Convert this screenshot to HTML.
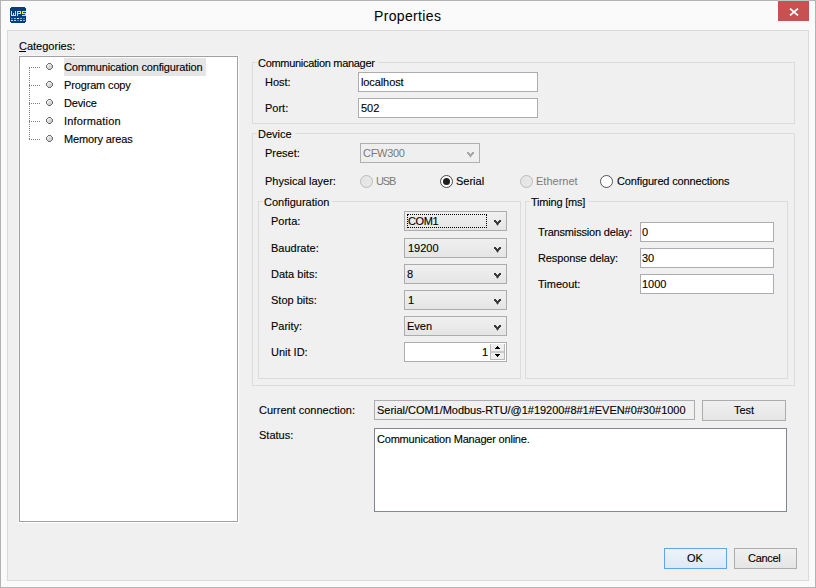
<!DOCTYPE html>
<html><head><meta charset="utf-8">
<style>
*{box-sizing:border-box;margin:0;padding:0}
html,body{width:816px;height:588px;overflow:hidden;background:#fafafa}
body{position:relative;font-family:"Liberation Sans",sans-serif;font-size:11px;color:#000}
.a{position:absolute}
.t{position:absolute;white-space:pre;line-height:13px;height:13px;-webkit-text-stroke:0.12px #000}
.g{color:#7a7a7a;-webkit-text-stroke:0}
.n{letter-spacing:-0.15px}
.grp{position:absolute;border:1px solid #dcdcdc}
.leg{position:absolute;background:#f0f0f0;padding:0 3px 0 1px;white-space:pre;line-height:13px;height:13px;-webkit-text-stroke:0.12px #000}
.tb{position:absolute;background:#fff;border:1px solid #abadb3}
.combo{position:absolute;border:1px solid #acacac;background:linear-gradient(#f0f0f0,#e5e5e5);height:20px;width:103px;left:404px}
.btn{position:absolute;border:1px solid #acacac;background:linear-gradient(#f0f0f0,#e5e5e5)}
.chev{position:absolute}
.rad{position:absolute;width:13px;height:13px;border-radius:50%}
</style></head><body>
<!-- window frame -->
<div class="a" style="left:0;top:0;width:816px;height:588px;border:1px solid #b3b3b3"></div>
<div class="a" style="left:778px;top:0;width:31px;height:1px;background:#b9c8c8"></div>
<!-- icon -->
<svg class="a" style="left:10px;top:7px" width="16" height="16" viewBox="0 0 16 16" shape-rendering="crispEdges">
<path d="M1 0H15V1H16V15H15V16H1V15H0V1H1Z" fill="#0a3c82"/>
<g fill="#f5f500">
<rect x="1" y="4" width="1" height="5"/><rect x="2" y="8" width="1" height="1"/><rect x="3" y="6" width="1" height="3"/><rect x="4" y="8" width="1" height="1"/><rect x="5" y="4" width="1" height="5"/>
<rect x="7" y="4" width="1" height="5"/><rect x="8" y="4" width="2" height="1"/><rect x="10" y="4" width="1" height="3"/><rect x="8" y="6" width="2" height="1"/>
<rect x="12" y="4" width="4" height="1"/><rect x="12" y="4" width="1" height="3"/><rect x="12" y="6" width="4" height="1"/><rect x="15" y="6" width="1" height="3"/><rect x="12" y="8" width="4" height="1"/>
</g><rect x="1" y="11" width="2" height="1" fill="#1e9ad6"/><rect x="4" y="11" width="2" height="1" fill="#5ec8e8"/><rect x="7" y="11" width="2" height="1" fill="#ffffff"/><rect x="10" y="11" width="2" height="1" fill="#5ec8e8"/><rect x="13" y="11" width="2" height="1" fill="#4a88b0"/><rect x="1" y="13" width="2" height="1" fill="#c8e6f0"/><rect x="4" y="13" width="2" height="1" fill="#b0dcf0"/><rect x="7" y="13" width="2" height="1" fill="#2a8ad0"/><rect x="10" y="13" width="2" height="1" fill="#c8e8f0"/><rect x="13" y="13" width="2" height="1" fill="#80b8e0"/></svg>
<div class="t" style="left:374px;top:7px;font-size:14px;line-height:18px;height:18px;letter-spacing:0.35px;color:#000;-webkit-text-stroke:0">Properties</div>
<div class="a" style="left:778px;top:1px;width:31px;height:20px;background:#c75050"></div>
<svg class="a" style="left:789px;top:8px" width="10" height="8" viewBox="0 0 10 8"><path d="M1 0.6L9 7.4M9 0.6L1 7.4" stroke="#fff" stroke-width="1.8"/></svg>

<!-- client -->
<div class="a" style="left:7px;top:30px;width:802px;height:551px;border:1px solid #dadada;background:#f0f0f0"></div>

<div class="t" style="left:19px;top:40px">Categories:</div>
<div class="a" style="left:19px;top:51px;width:7px;height:1px;background:#000"></div>

<!-- tree -->
<div class="a" style="left:18px;top:55px;width:221px;height:468px;border:1px solid #f6f6f6;border-right-color:#fff;border-bottom-color:#fff"></div>
<div class="a" style="left:19px;top:56px;width:219px;height:466px;background:#fff;border:1px solid #a0a0a0"></div>
<svg class="a" style="left:0;top:0" width="60" height="150" shape-rendering="crispEdges"><g fill="#7f7f7f"><rect x="29" y="67" width="1" height="1"/><rect x="29" y="68" width="1" height="1"/><rect x="29" y="70" width="1" height="1"/><rect x="29" y="72" width="1" height="1"/><rect x="29" y="74" width="1" height="1"/><rect x="29" y="76" width="1" height="1"/><rect x="29" y="78" width="1" height="1"/><rect x="29" y="80" width="1" height="1"/><rect x="29" y="82" width="1" height="1"/><rect x="29" y="84" width="1" height="1"/><rect x="29" y="85" width="1" height="1"/><rect x="29" y="86" width="1" height="1"/><rect x="29" y="88" width="1" height="1"/><rect x="29" y="90" width="1" height="1"/><rect x="29" y="92" width="1" height="1"/><rect x="29" y="94" width="1" height="1"/><rect x="29" y="96" width="1" height="1"/><rect x="29" y="98" width="1" height="1"/><rect x="29" y="100" width="1" height="1"/><rect x="29" y="102" width="1" height="1"/><rect x="29" y="103" width="1" height="1"/><rect x="29" y="104" width="1" height="1"/><rect x="29" y="106" width="1" height="1"/><rect x="29" y="108" width="1" height="1"/><rect x="29" y="110" width="1" height="1"/><rect x="29" y="112" width="1" height="1"/><rect x="29" y="114" width="1" height="1"/><rect x="29" y="116" width="1" height="1"/><rect x="29" y="118" width="1" height="1"/><rect x="29" y="120" width="1" height="1"/><rect x="29" y="121" width="1" height="1"/><rect x="29" y="122" width="1" height="1"/><rect x="29" y="124" width="1" height="1"/><rect x="29" y="126" width="1" height="1"/><rect x="29" y="128" width="1" height="1"/><rect x="29" y="130" width="1" height="1"/><rect x="29" y="132" width="1" height="1"/><rect x="29" y="134" width="1" height="1"/><rect x="29" y="136" width="1" height="1"/><rect x="29" y="138" width="1" height="1"/><rect x="29" y="139" width="1" height="1"/><rect x="31" y="67" width="1" height="1"/><rect x="31" y="85" width="1" height="1"/><rect x="31" y="103" width="1" height="1"/><rect x="31" y="121" width="1" height="1"/><rect x="31" y="139" width="1" height="1"/><rect x="33" y="67" width="1" height="1"/><rect x="33" y="85" width="1" height="1"/><rect x="33" y="103" width="1" height="1"/><rect x="33" y="121" width="1" height="1"/><rect x="33" y="139" width="1" height="1"/><rect x="35" y="67" width="1" height="1"/><rect x="35" y="85" width="1" height="1"/><rect x="35" y="103" width="1" height="1"/><rect x="35" y="121" width="1" height="1"/><rect x="35" y="139" width="1" height="1"/><rect x="37" y="67" width="1" height="1"/><rect x="37" y="85" width="1" height="1"/><rect x="37" y="103" width="1" height="1"/><rect x="37" y="121" width="1" height="1"/><rect x="37" y="139" width="1" height="1"/><rect x="39" y="67" width="1" height="1"/><rect x="39" y="85" width="1" height="1"/><rect x="39" y="103" width="1" height="1"/><rect x="39" y="121" width="1" height="1"/><rect x="39" y="139" width="1" height="1"/></g><defs><linearGradient id="bg" x1="0" y1="0" x2="1" y2="1"><stop offset="0" stop-color="#fafafa"/><stop offset="1" stop-color="#b9bcc0"/></linearGradient></defs><g transform="translate(0,63)"><g fill="url(#bg)"><rect x="47" y="1" width="5" height="5"/></g><g fill="#707070"><rect x="48" y="0" width="3" height="1"/><rect x="47" y="1" width="1" height="1"/><rect x="51" y="1" width="1" height="1"/><rect x="46" y="2" width="1" height="3"/><rect x="52" y="2" width="1" height="3"/><rect x="47" y="5" width="1" height="1"/><rect x="51" y="5" width="1" height="1"/><rect x="48" y="6" width="3" height="1"/></g></g><g transform="translate(0,81)"><g fill="url(#bg)"><rect x="47" y="1" width="5" height="5"/></g><g fill="#707070"><rect x="48" y="0" width="3" height="1"/><rect x="47" y="1" width="1" height="1"/><rect x="51" y="1" width="1" height="1"/><rect x="46" y="2" width="1" height="3"/><rect x="52" y="2" width="1" height="3"/><rect x="47" y="5" width="1" height="1"/><rect x="51" y="5" width="1" height="1"/><rect x="48" y="6" width="3" height="1"/></g></g><g transform="translate(0,99)"><g fill="url(#bg)"><rect x="47" y="1" width="5" height="5"/></g><g fill="#707070"><rect x="48" y="0" width="3" height="1"/><rect x="47" y="1" width="1" height="1"/><rect x="51" y="1" width="1" height="1"/><rect x="46" y="2" width="1" height="3"/><rect x="52" y="2" width="1" height="3"/><rect x="47" y="5" width="1" height="1"/><rect x="51" y="5" width="1" height="1"/><rect x="48" y="6" width="3" height="1"/></g></g><g transform="translate(0,117)"><g fill="url(#bg)"><rect x="47" y="1" width="5" height="5"/></g><g fill="#707070"><rect x="48" y="0" width="3" height="1"/><rect x="47" y="1" width="1" height="1"/><rect x="51" y="1" width="1" height="1"/><rect x="46" y="2" width="1" height="3"/><rect x="52" y="2" width="1" height="3"/><rect x="47" y="5" width="1" height="1"/><rect x="51" y="5" width="1" height="1"/><rect x="48" y="6" width="3" height="1"/></g></g><g transform="translate(0,135)"><g fill="url(#bg)"><rect x="47" y="1" width="5" height="5"/></g><g fill="#707070"><rect x="48" y="0" width="3" height="1"/><rect x="47" y="1" width="1" height="1"/><rect x="51" y="1" width="1" height="1"/><rect x="46" y="2" width="1" height="3"/><rect x="52" y="2" width="1" height="3"/><rect x="47" y="5" width="1" height="1"/><rect x="51" y="5" width="1" height="1"/><rect x="48" y="6" width="3" height="1"/></g></g></svg>
<div class="a" style="left:64px;top:58px;width:142px;height:18px;background:#e5e5e5"></div>
<div class="t n" style="left:64px;top:61px">Communication configuration</div>
<div class="t n" style="left:64px;top:79px">Program copy</div>
<div class="t n" style="left:64px;top:97px">Device</div>
<div class="t" style="left:64px;top:115px;letter-spacing:0.15px">Information</div>
<div class="t n" style="left:64px;top:133px">Memory areas</div>

<!-- comm manager -->
<div class="grp" style="left:252px;top:62px;width:543px;height:62px"></div>
<div class="leg" style="left:257px;top:57px;letter-spacing:-0.3px">Communication manager</div>
<div class="t" style="left:265px;top:76px">Host:</div>
<div class="tb" style="left:358px;top:72px;width:180px;height:20px"></div>
<div class="t" style="left:361px;top:76px;letter-spacing:-0.1px">localhost</div>
<div class="t" style="left:265px;top:102px">Port:</div>
<div class="tb" style="left:358px;top:98px;width:180px;height:20px"></div>
<div class="t" style="left:361px;top:102px">502</div>

<!-- device -->
<div class="grp" style="left:252px;top:133px;width:543px;height:253px"></div>
<div class="leg" style="left:257px;top:128px">Device</div>
<div class="t" style="left:265px;top:147px">Preset:</div>
<div class="a" style="left:360px;top:143px;width:120px;height:20px;background:#efefef;border:1px solid #b0b0b0"></div>
<div class="t g" style="left:363px;top:147px;letter-spacing:-0.3px">CFW300</div>
<svg class="chev" style="left:467px;top:152px" width="7" height="6" shape-rendering="crispEdges"><g fill="#a8a8a8"><rect x="0" y="0" width="1" height="1"/><rect x="1" y="0" width="1" height="1"/><rect x="5" y="0" width="1" height="1"/><rect x="6" y="0" width="1" height="1"/><rect x="0" y="1" width="1" height="1"/><rect x="1" y="1" width="1" height="1"/><rect x="2" y="1" width="1" height="1"/><rect x="4" y="1" width="1" height="1"/><rect x="5" y="1" width="1" height="1"/><rect x="6" y="1" width="1" height="1"/><rect x="1" y="2" width="1" height="1"/><rect x="2" y="2" width="1" height="1"/><rect x="3" y="2" width="1" height="1"/><rect x="4" y="2" width="1" height="1"/><rect x="5" y="2" width="1" height="1"/><rect x="2" y="3" width="1" height="1"/><rect x="3" y="3" width="1" height="1"/><rect x="4" y="3" width="1" height="1"/><rect x="3" y="4" width="1" height="1"/></g><g fill="#d4d4d4"><rect x="2" y="4" width="1" height="1"/><rect x="4" y="4" width="1" height="1"/><rect x="3" y="5" width="1" height="1"/></g></svg>
<div class="t" style="left:265px;top:175px">Physical layer:</div>

<div class="rad" style="left:360px;top:175px;border:1px solid #bcbcbc;background:#e6e6e6"></div>
<div class="t g" style="left:376px;top:175px;letter-spacing:-1.2px">USB</div>
<div class="rad" style="left:440px;top:175px;border:1px solid #444;background:#fff"></div>
<div class="a" style="left:443px;top:178px;width:7px;height:7px;border-radius:50%;background:#1e1e1e"></div>
<div class="t" style="left:456px;top:175px">Serial</div>
<div class="rad" style="left:520px;top:175px;border:1px solid #bcbcbc;background:#e6e6e6"></div>
<div class="t g" style="left:536px;top:175px">Ethernet</div>
<div class="rad" style="left:600px;top:175px;border:1px solid #555;background:#fff"></div>
<div class="t n" style="left:617px;top:175px">Configured connections</div>

<!-- configuration -->
<div class="grp" style="left:258px;top:201px;width:263px;height:178px"></div>
<div class="leg" style="left:263px;top:196px">Configuration</div>
<div class="t" style="left:271px;top:215px">Porta:</div>
<div class="t" style="left:271px;top:242px">Baudrate:</div>
<div class="t" style="left:271px;top:268px">Data bits:</div>
<div class="t" style="left:271px;top:294px">Stop bits:</div>
<div class="t" style="left:271px;top:320px">Parity:</div>
<div class="t" style="left:271px;top:346px">Unit ID:</div>
<div class="combo" style="top:211px"></div>
<div class="a" style="left:407px;top:214px;width:80px;height:14px;border:1px dotted #000"></div>
<div class="t" style="left:408px;top:215px;letter-spacing:-0.4px">COM1</div>
<div class="combo" style="top:238px"></div>
<div class="t" style="left:408px;top:242px">19200</div>
<div class="combo" style="top:264px"></div>
<div class="t" style="left:407px;top:268px">8</div>
<div class="combo" style="top:290px"></div>
<div class="t" style="left:408px;top:294px">1</div>
<div class="combo" style="top:316px"></div>
<div class="t" style="left:407px;top:320px">Even</div>
<svg class="chev" style="left:494px;top:220px" width="7" height="6" shape-rendering="crispEdges"><g fill="#3a3a3a"><rect x="0" y="0" width="1" height="1"/><rect x="1" y="0" width="1" height="1"/><rect x="5" y="0" width="1" height="1"/><rect x="6" y="0" width="1" height="1"/><rect x="0" y="1" width="1" height="1"/><rect x="1" y="1" width="1" height="1"/><rect x="2" y="1" width="1" height="1"/><rect x="4" y="1" width="1" height="1"/><rect x="5" y="1" width="1" height="1"/><rect x="6" y="1" width="1" height="1"/><rect x="1" y="2" width="1" height="1"/><rect x="2" y="2" width="1" height="1"/><rect x="3" y="2" width="1" height="1"/><rect x="4" y="2" width="1" height="1"/><rect x="5" y="2" width="1" height="1"/><rect x="2" y="3" width="1" height="1"/><rect x="3" y="3" width="1" height="1"/><rect x="4" y="3" width="1" height="1"/><rect x="3" y="4" width="1" height="1"/></g><g fill="#9a9a9a"><rect x="2" y="4" width="1" height="1"/><rect x="4" y="4" width="1" height="1"/><rect x="3" y="5" width="1" height="1"/></g></svg>
<svg class="chev" style="left:494px;top:247px" width="7" height="6" shape-rendering="crispEdges"><g fill="#3a3a3a"><rect x="0" y="0" width="1" height="1"/><rect x="1" y="0" width="1" height="1"/><rect x="5" y="0" width="1" height="1"/><rect x="6" y="0" width="1" height="1"/><rect x="0" y="1" width="1" height="1"/><rect x="1" y="1" width="1" height="1"/><rect x="2" y="1" width="1" height="1"/><rect x="4" y="1" width="1" height="1"/><rect x="5" y="1" width="1" height="1"/><rect x="6" y="1" width="1" height="1"/><rect x="1" y="2" width="1" height="1"/><rect x="2" y="2" width="1" height="1"/><rect x="3" y="2" width="1" height="1"/><rect x="4" y="2" width="1" height="1"/><rect x="5" y="2" width="1" height="1"/><rect x="2" y="3" width="1" height="1"/><rect x="3" y="3" width="1" height="1"/><rect x="4" y="3" width="1" height="1"/><rect x="3" y="4" width="1" height="1"/></g><g fill="#9a9a9a"><rect x="2" y="4" width="1" height="1"/><rect x="4" y="4" width="1" height="1"/><rect x="3" y="5" width="1" height="1"/></g></svg>
<svg class="chev" style="left:494px;top:273px" width="7" height="6" shape-rendering="crispEdges"><g fill="#3a3a3a"><rect x="0" y="0" width="1" height="1"/><rect x="1" y="0" width="1" height="1"/><rect x="5" y="0" width="1" height="1"/><rect x="6" y="0" width="1" height="1"/><rect x="0" y="1" width="1" height="1"/><rect x="1" y="1" width="1" height="1"/><rect x="2" y="1" width="1" height="1"/><rect x="4" y="1" width="1" height="1"/><rect x="5" y="1" width="1" height="1"/><rect x="6" y="1" width="1" height="1"/><rect x="1" y="2" width="1" height="1"/><rect x="2" y="2" width="1" height="1"/><rect x="3" y="2" width="1" height="1"/><rect x="4" y="2" width="1" height="1"/><rect x="5" y="2" width="1" height="1"/><rect x="2" y="3" width="1" height="1"/><rect x="3" y="3" width="1" height="1"/><rect x="4" y="3" width="1" height="1"/><rect x="3" y="4" width="1" height="1"/></g><g fill="#9a9a9a"><rect x="2" y="4" width="1" height="1"/><rect x="4" y="4" width="1" height="1"/><rect x="3" y="5" width="1" height="1"/></g></svg>
<svg class="chev" style="left:494px;top:299px" width="7" height="6" shape-rendering="crispEdges"><g fill="#3a3a3a"><rect x="0" y="0" width="1" height="1"/><rect x="1" y="0" width="1" height="1"/><rect x="5" y="0" width="1" height="1"/><rect x="6" y="0" width="1" height="1"/><rect x="0" y="1" width="1" height="1"/><rect x="1" y="1" width="1" height="1"/><rect x="2" y="1" width="1" height="1"/><rect x="4" y="1" width="1" height="1"/><rect x="5" y="1" width="1" height="1"/><rect x="6" y="1" width="1" height="1"/><rect x="1" y="2" width="1" height="1"/><rect x="2" y="2" width="1" height="1"/><rect x="3" y="2" width="1" height="1"/><rect x="4" y="2" width="1" height="1"/><rect x="5" y="2" width="1" height="1"/><rect x="2" y="3" width="1" height="1"/><rect x="3" y="3" width="1" height="1"/><rect x="4" y="3" width="1" height="1"/><rect x="3" y="4" width="1" height="1"/></g><g fill="#9a9a9a"><rect x="2" y="4" width="1" height="1"/><rect x="4" y="4" width="1" height="1"/><rect x="3" y="5" width="1" height="1"/></g></svg>
<svg class="chev" style="left:494px;top:325px" width="7" height="6" shape-rendering="crispEdges"><g fill="#3a3a3a"><rect x="0" y="0" width="1" height="1"/><rect x="1" y="0" width="1" height="1"/><rect x="5" y="0" width="1" height="1"/><rect x="6" y="0" width="1" height="1"/><rect x="0" y="1" width="1" height="1"/><rect x="1" y="1" width="1" height="1"/><rect x="2" y="1" width="1" height="1"/><rect x="4" y="1" width="1" height="1"/><rect x="5" y="1" width="1" height="1"/><rect x="6" y="1" width="1" height="1"/><rect x="1" y="2" width="1" height="1"/><rect x="2" y="2" width="1" height="1"/><rect x="3" y="2" width="1" height="1"/><rect x="4" y="2" width="1" height="1"/><rect x="5" y="2" width="1" height="1"/><rect x="2" y="3" width="1" height="1"/><rect x="3" y="3" width="1" height="1"/><rect x="4" y="3" width="1" height="1"/><rect x="3" y="4" width="1" height="1"/></g><g fill="#9a9a9a"><rect x="2" y="4" width="1" height="1"/><rect x="4" y="4" width="1" height="1"/><rect x="3" y="5" width="1" height="1"/></g></svg>
<div class="tb" style="left:404px;top:342px;width:103px;height:20px"></div>
<div class="t" style="left:482px;top:346px">1</div>
<div class="a" style="left:490px;top:344px;width:15px;height:16px;border:1px solid #b9b9b9;border-top:0;background:#eeeeee"></div>
<div class="a" style="left:491px;top:351px;width:13px;height:2px;background:#cbcbcb"></div>
<svg class="a" style="left:495px;top:346px" width="5" height="11" shape-rendering="crispEdges"><g fill="#000"><rect x="2" y="0" width="1" height="1"/><rect x="1" y="1" width="3" height="1"/><rect x="0" y="2" width="5" height="1"/><rect x="0" y="8" width="5" height="1"/><rect x="1" y="9" width="3" height="1"/><rect x="2" y="10" width="1" height="1"/></g></svg>

<!-- timing -->
<div class="grp" style="left:525px;top:201px;width:263px;height:178px"></div>
<div class="leg" style="left:530px;top:196px;letter-spacing:-0.2px">Timing [ms]</div>
<div class="t" style="left:538px;top:226px;letter-spacing:-0.17px">Transmission delay:</div>
<div class="tb" style="left:640px;top:222px;width:134px;height:20px"></div>
<div class="t" style="left:642px;top:226px">0</div>
<div class="t" style="left:538px;top:252px;letter-spacing:-0.13px">Response delay:</div>
<div class="tb" style="left:640px;top:248px;width:134px;height:20px"></div>
<div class="t" style="left:642px;top:252px">30</div>
<div class="t" style="left:538px;top:278px">Timeout:</div>
<div class="tb" style="left:640px;top:274px;width:134px;height:20px"></div>
<div class="t" style="left:642px;top:278px">1000</div>

<!-- bottom -->
<div class="t" style="left:259px;top:404px">Current connection:</div>
<div class="tb" style="left:374px;top:400px;width:321px;height:20px;background:#f0f0f0"></div>
<div class="t" style="left:377px;top:404px;letter-spacing:-0.03px">Serial/COM1/Modbus-RTU/@1#19200#8#1#EVEN#0#30#1000</div>
<div class="btn" style="left:702px;top:400px;width:84px;height:21px"></div>
<div class="t" style="left:734px;top:404px">Test</div>
<div class="t" style="left:259px;top:429px">Status:</div>
<div class="tb" style="left:374px;top:428px;width:413px;height:84px;border-color:#828790"></div>
<div class="t" style="left:377px;top:433px;letter-spacing:-0.2px">Communication Manager online.</div>

<div class="btn" style="left:664px;top:548px;width:63px;height:21px;border-color:#5ea5f0;background:linear-gradient(#edf3fa,#dde9f6)"></div>
<div class="t" style="left:687px;top:552px">OK</div>
<div class="btn" style="left:734px;top:548px;width:63px;height:21px"></div>
<div class="t" style="left:748px;top:552px;letter-spacing:-0.3px">Cancel</div>
</body></html>
